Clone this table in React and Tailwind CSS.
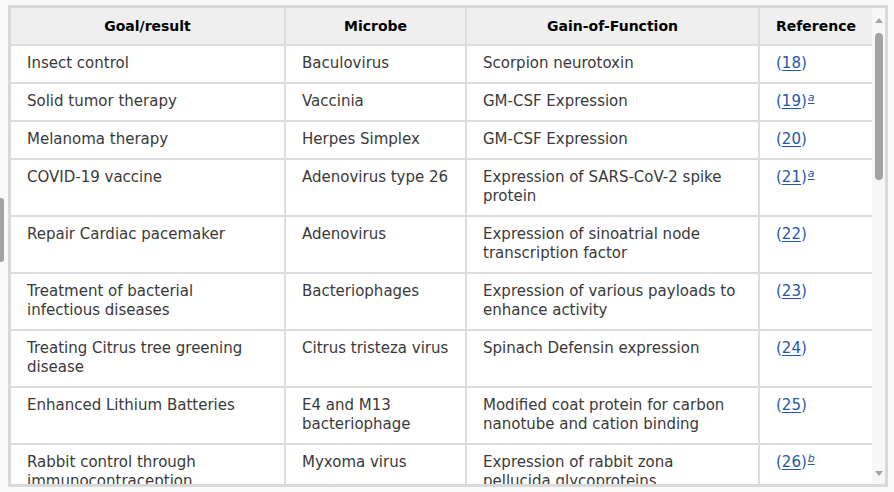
import React from "react";

const rows = [
  ["Insect control", "Baculovirus", "Scorpion neurotoxin", "18", ""],
  ["Solid tumor therapy", "Vaccinia", "GM-CSF Expression", "19", "a"],
  ["Melanoma therapy", "Herpes Simplex", "GM-CSF Expression", "20", ""],
  ["COVID-19 vaccine", "Adenovirus type 26", "Expression of SARS-CoV-2 spike\nprotein", "21", "a"],
  ["Repair Cardiac pacemaker", "Adenovirus", "Expression of sinoatrial node\ntranscription factor", "22", ""],
  ["Treatment of bacterial\ninfectious diseases", "Bacteriophages", "Expression of various payloads to\nenhance activity", "23", ""],
  ["Treating Citrus tree greening\ndisease", "Citrus tristeza virus", "Spinach Defensin expression", "24", ""],
  ["Enhanced Lithium Batteries", "E4 and M13\nbacteriophage", "Modified coat protein for carbon\nnanotube and cation binding", "25", ""],
  ["Rabbit control through\nimmunocontraception", "Myxoma virus", "Expression of rabbit zona\npellucida glycoproteins", "26", "b"],
];

function Ref({ n, sup }) {
  return (
    <span className="text-[#2558a8]">
      (<span className="underline underline-offset-2">{n}</span>)
      {sup && (
        <sup className="italic underline underline-offset-2 text-[11px] ml-[1px]">{sup}</sup>
      )}
    </span>
  );
}

export default function App() {
  const cell = "align-top pl-4 pr-2 pt-[8px] pb-[9px] leading-[19px] border-b-2 border-[#dcdcdc] whitespace-pre-line";
  return (
    <div
      className="w-[894px] h-[492px] bg-[#fafafa] relative overflow-hidden"
      style={{ fontFamily: '"DejaVu Sans", sans-serif' }}
    >
      <div className="absolute left-0 top-[198px] w-[4px] h-[64px] rounded-r-[3px] bg-[#a3a3a3]" />
      <div className="pt-[5px] pl-[8px]">
        <div className="w-[880px] h-[482px] border-[3px] border-[#d9d9d9] flex overflow-hidden bg-white">
          <div className="w-[861px] h-full overflow-hidden">
            <table className="table-fixed border-collapse w-[861px] text-[15px] text-[#3a3a3a]">
              <colgroup>
                <col className="w-[274px]" />
                <col className="w-[181px]" />
                <col className="w-[293px]" />
                <col className="w-[113px]" />
              </colgroup>
              <thead>
                <tr className="bg-[#efefef]">
                  {["Goal/result", "Microbe", "Gain-of-Function", "Reference"].map((h, i) => (
                    <th
                      key={h}
                      className={`h-[37px] text-[14px] font-bold text-black text-center leading-[19px] border-b-2 border-[#dcdcdc] ${i < 3 ? "border-r-2" : ""}`}
                    >
                      {h}
                    </th>
                  ))}
                </tr>
              </thead>
              <tbody>
                {rows.map((r) => (
                  <tr key={r[0]}>
                    <td className={`${cell} border-r-2`}>{r[0]}</td>
                    <td className={`${cell} border-r-2`}>{r[1]}</td>
                    <td className={`${cell} border-r-2`}>{r[2]}</td>
                    <td className={cell}>
                      <Ref n={r[3]} sup={r[4]} />
                    </td>
                  </tr>
                ))}
              </tbody>
            </table>
          </div>
          <div className="w-[13px] h-full bg-[#f7f7f7] flex flex-col items-center">
            <div className="mt-[10px] w-0 h-0 border-l-[4px] border-r-[4px] border-b-[5px] border-l-transparent border-r-transparent border-b-[#a3a3a3]" />
            <div className="mt-[10px] w-[8px] h-[147px] rounded-[4px] bg-[#a3a3a3]" />
            <div className="flex-1" />
            <div className="mb-[8px] w-0 h-0 border-l-[4px] border-r-[4px] border-t-[5px] border-l-transparent border-r-transparent border-t-[#a3a3a3]" />
          </div>
        </div>
      </div>
    </div>
  );
}
